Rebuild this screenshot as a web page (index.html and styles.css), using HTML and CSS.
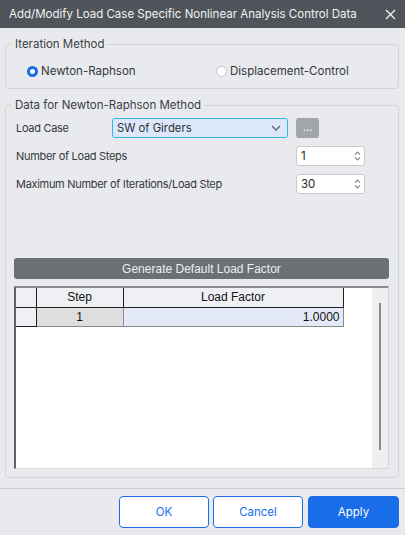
FILE: index.html
```html
<!DOCTYPE html>
<html>
<head>
<meta charset="utf-8">
<link rel="stylesheet" href="styles.css">
</head>
<body>
<div class="dialog">
  <div class="titlebar">
    <span class="title">Add/Modify Load Case Specific Nonlinear Analysis Control Data</span>
    <svg class="close" width="11" height="11" viewBox="0 0 11 11"><path d="M1 1 L10 10 M10 1 L1 10" stroke="#f2f2f2" stroke-width="1.3" fill="none"/></svg>
  </div>

  <fieldset class="group g1">
    <legend>Iteration Method</legend>
    <div class="radios">
      <label class="radio"><span class="dot on"></span>Newton-Raphson</label>
      <label class="radio"><span class="dot"></span>Displacement-Control</label>
    </div>
  </fieldset>

  <fieldset class="group g2">
    <legend>Data for Newton-Raphson Method</legend>
    <div class="form">
      <span class="lbl">Load Case</span>
      <div class="select"><span>SW of Girders</span>
        <svg width="10" height="6" viewBox="0 0 10 6"><path d="M1 1 L5 5 L9 1" stroke="#6f7378" stroke-width="1.6" fill="none"/></svg>
      </div>
      <div class="dots">...</div>

      <span class="lbl wide">Number of Load Steps</span>
      <div class="spin"><span>1</span><span class="arrows"><svg width="7" height="12" viewBox="0 0 7 12"><path d="M1 4.5 L3.5 2 L6 4.5 M1 7.5 L3.5 10 L6 7.5" stroke="#8a8e93" stroke-width="1.2" fill="none"/></svg></span></div>

      <span class="lbl wide">Maximum Number of Iterations/Load Step</span>
      <div class="spin"><span>30</span><span class="arrows"><svg width="7" height="12" viewBox="0 0 7 12"><path d="M1 4.5 L3.5 2 L6 4.5 M1 7.5 L3.5 10 L6 7.5" stroke="#8a8e93" stroke-width="1.2" fill="none"/></svg></span></div>
    </div>

    <div class="genbtn">Generate Default Load Factor</div>

    <div class="gridbox">
      <div class="gridarea">
        <table class="grid">
          <tr class="hdr"><td class="rh"></td><td class="c-step">Step</td><td class="c-lf">Load Factor</td></tr>
          <tr class="row"><td class="rh"></td><td class="c-step v">1</td><td class="c-lf v num">1.0000</td></tr>
        </table>
      </div>
      <div class="vscroll"><div class="thumb"></div></div>
    </div>
  </fieldset>

  <div class="sep"></div>
  <div class="buttons">
    <button class="btn">OK</button>
    <button class="btn">Cancel</button>
    <button class="btn primary">Apply</button>
  </div>
</div>
</body>
</html>
```

FILE: styles.css
```css
* { box-sizing: border-box; }
html, body { margin: 0; padding: 0; }
body {
  width: 405px;
  height: 535px;
  background: #e9eaee;
  font-family: Inter, "Noto Sans", sans-serif;
  color: #33373c;
  overflow: hidden;
}
.dialog { width: 405px; height: 535px; display: flex; flex-direction: column; }

.titlebar {
  height: 28px;
  background: #4f555b;
  display: flex;
  align-items: center;
  justify-content: space-between;
  padding: 0 9px 0 9px;
  color: #f2f2f2;
  font-size: 11.5px;
}

.group {
  margin: 8px 6px 0 5px;
  padding: 0 9px 8px 6px;
  border: 1px solid #d3d5d9;
  border-radius: 4px;
}
.group legend {
  font-size: 11.5px;
  line-height: 16px;
  color: #3a3e44;
  padding: 0 3px;
  margin-left: 0;
}
.g1 { padding-bottom: 9px; }
.radios {
  display: grid;
  grid-template-columns: 189px 1fr;
  padding-left: 15px;
  margin-top: 11px;
}
.radio {
  display: flex;
  align-items: center;
  font-size: 11.5px;
  line-height: 16px;
  color: #33373c;
}
.dot {
  width: 11px;
  height: 11px;
  border-radius: 50%;
  border: 1px solid #c6c8cc;
  background: #fff;
  margin-right: 3px;
}
.dot.on { border: 3px solid #1a6de8; }

.form {
  display: grid;
  grid-template-columns: 96px 184px 69px;
  grid-auto-rows: 20px;
  row-gap: 8px;
  margin-top: 5px;
  padding-left: 4px;
  align-items: center;
  font-size: 11px;
}
.lbl { color: #33373c; letter-spacing: -0.3px; }
.lbl.wide { grid-column: 1 / 3; }
.select {
  width: 176px;
  height: 20px;
  border: 1px solid #38b1ee;
  border-radius: 3px;
  background: #dce8f9;
  display: flex;
  align-items: center;
  justify-content: space-between;
  padding: 0 6px 0 4px;
  font-size: 11.3px;
  color: #2b2f34;
}
.dots {
  width: 23px;
  height: 20px;
  background: #a2a5aa;
  border-radius: 3px;
  color: #fff;
  font-size: 11px;
  display: flex;
  align-items: center;
  justify-content: center;
  padding-bottom: 3px;
}
.spin {
  width: 69px;
  height: 20px;
  background: #fff;
  border: 1px solid #c7c9cd;
  border-radius: 3px;
  display: flex;
  align-items: center;
  justify-content: space-between;
  padding: 0 3px 0 4px;
  font-size: 11.5px;
  color: #1c1f24;
}
.arrows { display: flex; align-items: center; }

.genbtn {
  margin: 64px 0 0 2px;
  height: 21px;
  background: #6b7075;
  border-radius: 3px;
  color: #eceef0;
  font-family: "Liberation Sans", Arial, sans-serif;
  font-size: 12px;
  display: flex;
  align-items: center;
  justify-content: center;
}

.gridbox {
  margin: 7px 0 0 2px;
  height: 183px;
  display: flex;
  border-top: 2px solid #8c8d90;
  border-left: 2px solid #5e6064;
  border-right: 1px solid #d6d7da;
  border-bottom: 1px solid #d6d7da;
  background: #fff;
}
.gridarea { flex: 1; background: #fff; }
.vscroll {
  width: 16px;
  background: #efefef;
  display: flex;
  justify-content: center;
  padding-top: 15px;
}
.thumb { width: 2px; height: 147px; background: #8a8a8a; margin-left: -1px; }

.grid {
  border-collapse: collapse;
  font-family: "Liberation Sans", Arial, sans-serif;
  font-size: 12px;
  color: #111;
}
.grid td { padding: 0; height: 19px; }
.grid .rh {
  width: 20px;
  background: #eff0f4;
  border-right: 1px solid #1e1e1e;
  border-bottom: 1px solid #1e1e1e;
}
.hdr td { background: #eff0f4; border-right: 1px solid #1e1e1e; border-bottom: 1px solid #1e1e1e; text-align: center; }
.c-step { width: 87px; }
.c-lf { width: 220px; }
.row td.v { border-right: 1px solid #8a8a8a; border-bottom: 1px solid #8a8a8a; text-align: center; }
.row td.c-step { background: #dedede; }
.row td.c-lf { background: #e3eaf6; }
.row td.num { text-align: right; padding-right: 3px; }

.sep { margin-top: 10px; height: 1px; background: #c9cacd; }
.buttons {
  display: flex;
  justify-content: flex-end;
  gap: 4px;
  padding: 7px 6px 0 0;
}
.btn {
  width: 90px;
  height: 32px;
  border: 1px solid #1a6de8;
  border-radius: 4px;
  background: #fff;
  color: #1a6de8;
  font-family: Inter, "Noto Sans", sans-serif;
  font-size: 11.5px;
}
.btn.primary { width: 91px; margin-left: 1px; background: #1a6de8; color: #fff; }
```
